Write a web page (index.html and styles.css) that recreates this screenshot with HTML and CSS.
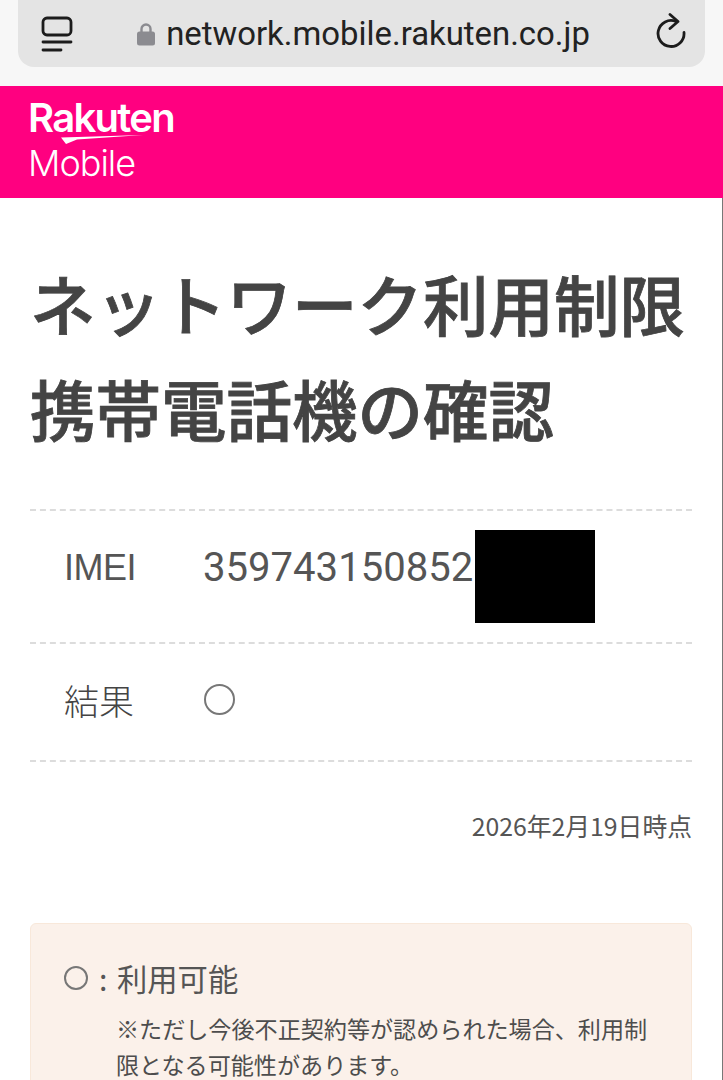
FILE: index.html
```html
<!DOCTYPE html>
<html lang="ja">
<head>
<meta charset="utf-8">
<title>ネットワーク利用制限携帯電話機の確認</title>
<link rel="stylesheet" href="styles.css">
</head>
<body>
<div class="chrome">
  <div class="urlbar">
    <svg class="tabs-icon" viewBox="0 0 32 36" width="32" height="36" fill="none" stroke="#1c1c1c" stroke-width="2.800" stroke-linecap="round" stroke-linejoin="round"><rect x="2" y="2" width="28" height="17" rx="4"/><path d="M2 26H30M2 34H20"/></svg>
    <div class="address">
      <svg class="lock" viewBox="0 0 18 24" width="18" height="24"><path d="M4.500 11V7a4.500 4.500 0 0 1 9 0v4" fill="none" stroke="#8b8b90" stroke-width="2.400"/><rect x="0" y="9.500" width="18" height="14" rx="2.500" fill="#8b8b90"/></svg>
      <span class="domain">network.mobile.rakuten.co.jp</span>
    </div>
    <svg class="reload" viewBox="0 0 32 42" width="32" height="42" fill="none" stroke="#1c1c1c" stroke-width="2.800" stroke-linecap="round" stroke-linejoin="round"><path d="M20 8.500A13 13 0 1 0 28 19.500"/><path d="M14 1.500l8 7-8 7"/></svg>
  </div>
</div>
<header class="brand">
  <div class="logo">
    <span class="logo-top">Rakuten</span>
    <svg class="swoosh" viewBox="0 0 82 9" width="82" height="9"><path d="M0 2.500L82 0 16 4.500 5 9Z" fill="#fff"/></svg>
    <span class="logo-bottom">Mobile</span>
  </div>
</header>
<main class="content">
  <h1 class="title">ネットワーク利用制限<br>携帯電話機の確認</h1>
  <div class="result-table">
    <div class="row row-imei">
      <div class="label label-latin">IMEI</div>
      <div class="value value-imei">359743150852</div>
      <div class="redaction"></div>
    </div>
    <div class="row row-result">
      <div class="label">結果</div>
      <div class="value"><span class="mark"></span></div>
    </div>
  </div>
  <p class="timestamp">2026年2月19日時点</p>
  <section class="notice">
    <div class="notice-head"><span class="mark mark-small"></span><span class="colon">:</span><span class="notice-title">利用可能</span></div>
    <p class="notice-body">※ただし今後不正契約等が認められた場合、利用制限となる可能性があります。</p>
  </section>
</main>
</body>
</html>
```
FILE: styles.css
```css
* { box-sizing: border-box; }
html, body { margin: 0; padding: 0; }
body {
  width: 723px;
  height: 1080px;
  overflow: hidden;
  background: #fff;
  font-family: "Noto Sans CJK JP", sans-serif;
  color: #444;
}
.chrome {
  height: 86px;
  padding: 0 18px;
  background: #f7f7f7;
}
.urlbar {
  height: 67px;
  display: flex;
  align-items: center;
  padding: 0 17px 0 23px;
  background: #e4e4e4;
  border-radius: 0 0 16px 16px;
}
.address {
  flex: 1;
  display: flex;
  align-items: center;
  justify-content: center;
  gap: 11px;
  padding-right: 2px;
}
.domain {
  font-family: Roboto, sans-serif;
  font-size: 32.900px;
  color: #222;
}
.brand {
  height: 112px;
  background: #ff0080;
  padding: 12px 0 0 28px;
}
.logo {
  display: flex;
  flex-direction: column;
  align-items: flex-start;
  color: #fff;
}
.logo-top {
  font-family: Inter, sans-serif;
  font-size: 40px;
  font-weight: 600;
  line-height: 40px;
  letter-spacing: -1.700px;
}
.swoosh { margin: -3px 0 0 33px; }
.logo-bottom {
  font-family: Inter, sans-serif;
  font-size: 36px;
  font-weight: 300;
  line-height: 38px;
  letter-spacing: -1px;
}
.content {
  height: 882px;
  overflow: hidden;
  padding: 52px 30px 0;
  border-right: 1px solid #777;
}
.title {
  margin: 0;
  font-size: 65.500px;
  font-weight: 500;
  -webkit-text-stroke: .8px #444;
  line-height: 105px;
  white-space: nowrap;
  color: #444;
}
.result-table {
  margin-top: 49px;
  border-top: 2px dashed #dcdcdc;
}
.row {
  display: flex;
  align-items: center;
  border-bottom: 2px dashed #dcdcdc;
  padding-left: 34px;
  font-size: 35px;
}
.row-imei { height: 133px; }
.row-result {
  height: 118px;
  padding-bottom: 6px;
}
.label {
  width: 139px;
  font-weight: 300;
}
.label-latin {
  margin-bottom: 18px;
  font-family: "Liberation Sans", sans-serif;
  font-size: 36px;
  font-weight: 400;
  letter-spacing: -.5px;
  color: #555;
}
.value {
  font-family: Roboto, sans-serif;
  font-size: 40.100px;
  font-weight: 400;
  color: #555;
  display: flex;
  align-items: center;
}
.value-imei { margin-bottom: 18px; }
.redaction {
  width: 120px;
  height: 93px;
  margin-left: 2px;
  background: #000;
}
.mark {
  display: block;
  width: 31px;
  height: 31px;
  margin-left: 1px;
  border: 2px solid #777;
  border-radius: 50%;
}
.timestamp {
  margin: 47px 0 0;
  text-align: right;
  font-size: 24.800px;
  line-height: 32px;
  color: #555;
}
.notice {
  margin-top: 82px;
  height: 200px;
  padding: 34px 30px 0 33px;
  background: #fbf1ea;
  border: 1px solid #f8e8da;
  border-radius: 6px;
}
.notice-head {
  display: flex;
  align-items: center;
  font-size: 30.300px;
  line-height: 40px;
  font-weight: 400;
  color: #555;
}
.mark-small {
  width: 24px;
  height: 24px;
  margin: 0 11px 0 0;
}
.colon { width: 18px; }
.notice-body {
  margin: 12px 0 0 52px;
  font-size: 23.100px;
  line-height: 36px;
  color: #4d4d4d;
}
```
